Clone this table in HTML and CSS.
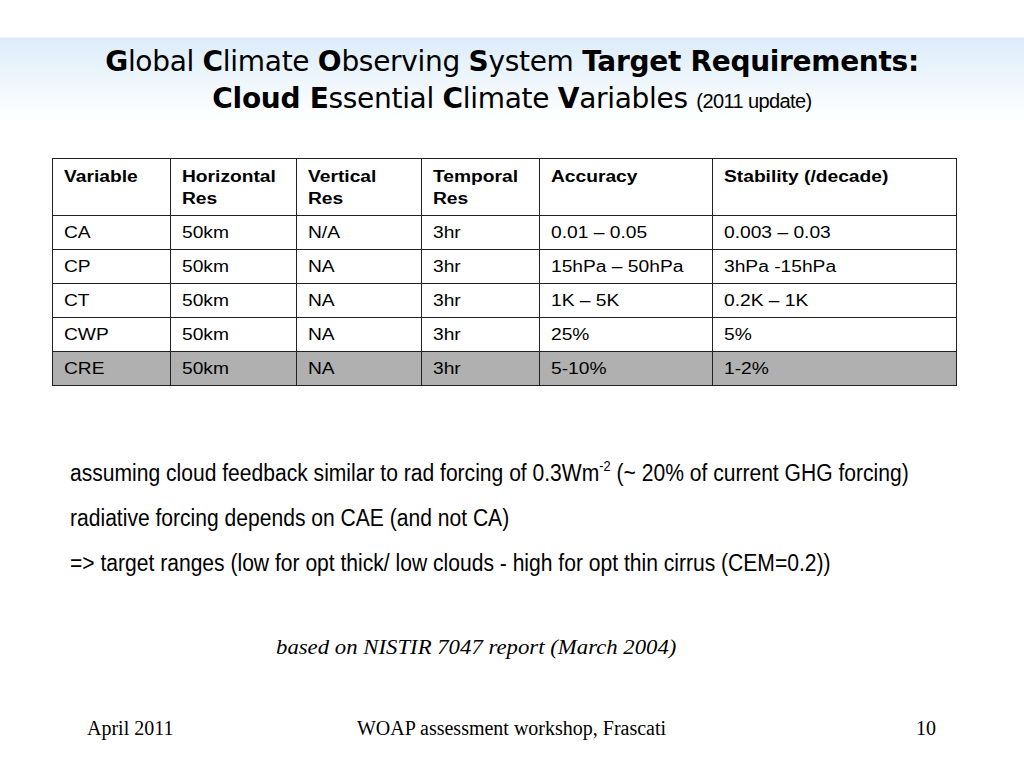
FILE: index.html
```html
<!DOCTYPE html>
<html>
<head>
<meta charset="utf-8">
<link rel="stylesheet" href="styles.css">
</head>
<body>
<div class="slide">
  <header class="title">
    <div class="line1"><b>G</b>lobal <b>C</b>limate <b>O</b>bserving <b>S</b>ystem <b>Target Requirements:</b></div>
    <div class="line2"><b>Cloud E</b>ssential <b>C</b>limate <b>V</b>ariables <span class="upd">(2011 update)</span></div>
  </header>
  <table class="req">
    <colgroup>
      <col style="width:118px"><col style="width:126px"><col style="width:125px"><col style="width:118px"><col style="width:173px"><col style="width:244px">
    </colgroup>
    <thead>
      <tr><th><span>Variable</span></th><th><span>Horizontal<br>Res</span></th><th><span>Vertical<br>Res</span></th><th><span>Temporal<br>Res</span></th><th><span>Accuracy</span></th><th><span>Stability (/decade)</span></th></tr>
    </thead>
    <tbody>
      <tr><td><span>CA</span></td><td><span>50km</span></td><td><span>N/A</span></td><td><span>3hr</span></td><td><span>0.01 – 0.05</span></td><td><span>0.003 – 0.03</span></td></tr>
      <tr><td><span>CP</span></td><td><span>50km</span></td><td><span>NA</span></td><td><span>3hr</span></td><td><span>15hPa – 50hPa</span></td><td><span>3hPa -15hPa</span></td></tr>
      <tr><td><span>CT</span></td><td><span>50km</span></td><td><span>NA</span></td><td><span>3hr</span></td><td><span>1K – 5K</span></td><td><span>0.2K – 1K</span></td></tr>
      <tr><td><span>CWP</span></td><td><span>50km</span></td><td><span>NA</span></td><td><span>3hr</span></td><td><span>25%</span></td><td><span>5%</span></td></tr>
      <tr class="hl"><td><span>CRE</span></td><td><span>50km</span></td><td><span>NA</span></td><td><span>3hr</span></td><td><span>5-10%</span></td><td><span>1-2%</span></td></tr>
    </tbody>
  </table>
  <div class="notes">
    <p><span class="nar">assuming cloud feedback similar to rad forcing of 0.3Wm<sup>-2</sup> (~ 20% of current GHG forcing)</span></p>
    <p><span class="nar">radiative forcing depends on CAE (and not CA)</span></p>
    <p><span class="nar">=&gt; target ranges (low for opt thick/ low clouds - high for opt thin cirrus (CEM=0.2))</span></p>
  </div>
  <p class="source"><span>based on NISTIR 7047 report (March 2004)</span></p>
  <footer class="foot">
    <span class="date">April 2011</span>
    <span class="event">WOAP assessment workshop, Frascati</span>
    <span class="page">10</span>
  </footer>
</div>
</body>
</html>
```
FILE: styles.css
```css
html, body { margin: 0; padding: 0; background: #fff; }
.slide {
  width: 1024px; height: 768px; position: relative; overflow: hidden;
  background: linear-gradient(to bottom, #fff 0, #fff 37px, #dcecf9 38px, #eef6fc 80px, #fff 118px, #fff 100%);
  display: flex; flex-direction: column;
}
.title {
  margin-top: 43px;
  text-align: center;
  font-family: "DejaVu Sans", sans-serif;
  font-size: 28px;
  line-height: 37px;
  color: #000;
  letter-spacing: -0.3px;
}
.title b { font-weight: bold; }
.title .upd { font-family: "Liberation Sans", Arial, sans-serif; font-size: 20px; letter-spacing: -0.6px; }
.req {
  margin: 38px 0 0 52px;
  border-collapse: collapse;
  table-layout: fixed;
  width: 904px;
  font-family: "Liberation Sans", Arial, sans-serif;
  font-size: 16px;
  color: #000;
}
.req th, .req td {
  border: 1.5px solid #222;
  text-align: left;
  vertical-align: top;
  padding: 8px 10px 6px 11px;
  line-height: 20px;
  white-space: nowrap;
}
.req th span, .req td span { display: inline-block; transform: scaleX(1.2); transform-origin: left center; }
.req th { font-weight: bold; height: 43px; padding-top: 7px; padding-bottom: 5px; line-height: 22px; }
.req td { height: 20px; padding-top: 7px; }
.req tr.hl td { background: #b0b0b0; }
.notes {
  margin: 73px 0 0 70px;
  font-family: "Liberation Sans", Arial, sans-serif;
  font-size: 23px;
  color: #000;
}
.notes p { margin: 0 0 17px; line-height: 28px; white-space: nowrap; }
.nar { display: inline-block; transform: scaleX(0.916); transform-origin: left center; }
.notes sup { font-size: 14px; line-height: 0; vertical-align: 10px; }
.source {
  margin: 41px 0 0 276px;
  font-family: "Liberation Serif", "Times New Roman", serif;
  font-style: italic;
  font-size: 21px;
}
.source span { display: inline-block; transform: scaleX(1.084); transform-origin: left center; }
.foot {
  margin-top: 57px;
  display: grid; grid-template-columns: 1fr auto 1fr; align-items: baseline;
  font-family: "Liberation Serif", "Times New Roman", serif;
  font-size: 20px;
  padding: 0 88px 0 87px;
}
.foot .page { justify-self: end; }
```
